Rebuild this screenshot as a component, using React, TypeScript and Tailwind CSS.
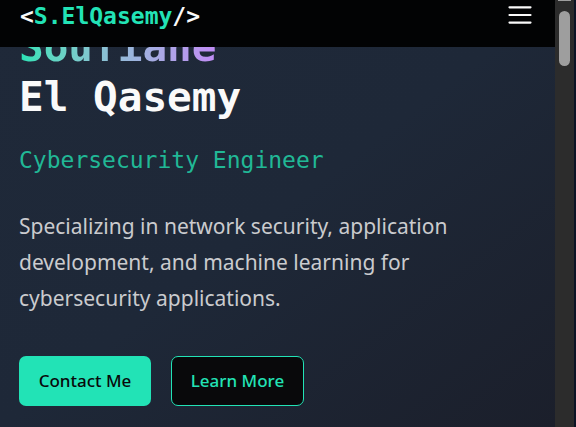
import React from "react";

function Header() {
  return (
    <header className="absolute inset-x-0 top-0 z-10 flex items-start justify-between bg-[#020304] px-5 pt-[3px] pb-[17px]">
      <a
        href="#home"
        className="font-['DejaVu_Sans_Mono','Liberation_Mono',monospace] text-[23px] leading-[27px] font-bold text-[#22e3b6]"
      >
        <span className="text-[#fafafa]">&lt;</span>S.ElQasemy
        <span className="text-[#fafafa]">/&gt;</span>
      </a>
      <button type="button" aria-label="Open menu" className="mr-[3px] flex h-6 w-6 items-center justify-center">
        <svg viewBox="0 0 24 24" className="h-6 w-6" fill="none" stroke="#fafafa" strokeWidth="2.2" strokeLinecap="round">
          <path d="M1.5 4.3H22.5M1.5 12H22.5M1.5 19.6H22.5" />
        </svg>
      </button>
    </header>
  );
}

function Hero() {
  return (
    <section
      id="home"
      className="min-h-screen bg-linear-to-br from-[#1f2939] via-[#1e2838] to-[#1b1f2b] px-[19px] pt-[22px] pb-5"
    >
      <h1 className="font-['DejaVu_Sans_Mono','Liberation_Mono',monospace] text-[41px] leading-[50px] font-bold text-[#fafafa]">
        <span className="block w-fit bg-linear-to-r from-[#22e3b6] to-[#c08cf5] bg-clip-text text-transparent">
          Soufiane
        </span>
        <span className="block">El Qasemy</span>
      </h1>
      <p className="mt-5 font-['DejaVu_Sans_Mono','Liberation_Mono',monospace] text-[23px] leading-9 text-[#21b896]">
        Cybersecurity Engineer
      </p>
      <p className="mt-[30px] max-w-[460px] font-['Noto_Sans',sans-serif] text-[21px] leading-[36px] text-[#cacbce]">
        Specializing in network security, application development, and machine learning for cybersecurity applications.
      </p>
      <div className="mt-10 flex gap-5 font-['Noto_Sans',sans-serif] text-[17px] font-medium">
        <button type="button" className="h-[50px] w-[132px] rounded-[7px] bg-[#22e3b6] text-[#09090b]">
          Contact Me
        </button>
        <button
          type="button"
          className="h-[50px] w-[133px] rounded-[7px] border border-[#22e3b6] bg-[#09090b] text-[#22e3b6]"
        >
          Learn More
        </button>
      </div>
    </section>
  );
}

function ScrollTrack() {
  return (
    <div aria-hidden="true" className="flex w-[21px] shrink-0 flex-col items-center border-r-2 border-[#0c1425] bg-[#2c2c2c]">
      <div className="h-px w-[13px] bg-[#9e9e9e]" />
      <div className="mt-[10px] h-[55px] w-[11px] rounded-full bg-[#9e9e9e]" />
    </div>
  );
}

export default function App() {
  return (
    <div className="flex h-screen overflow-hidden bg-[#1b1f2b]">
      <main className="relative min-w-0 flex-1 overflow-hidden">
        <Header />
        <Hero />
      </main>
      <ScrollTrack />
    </div>
  );
}
